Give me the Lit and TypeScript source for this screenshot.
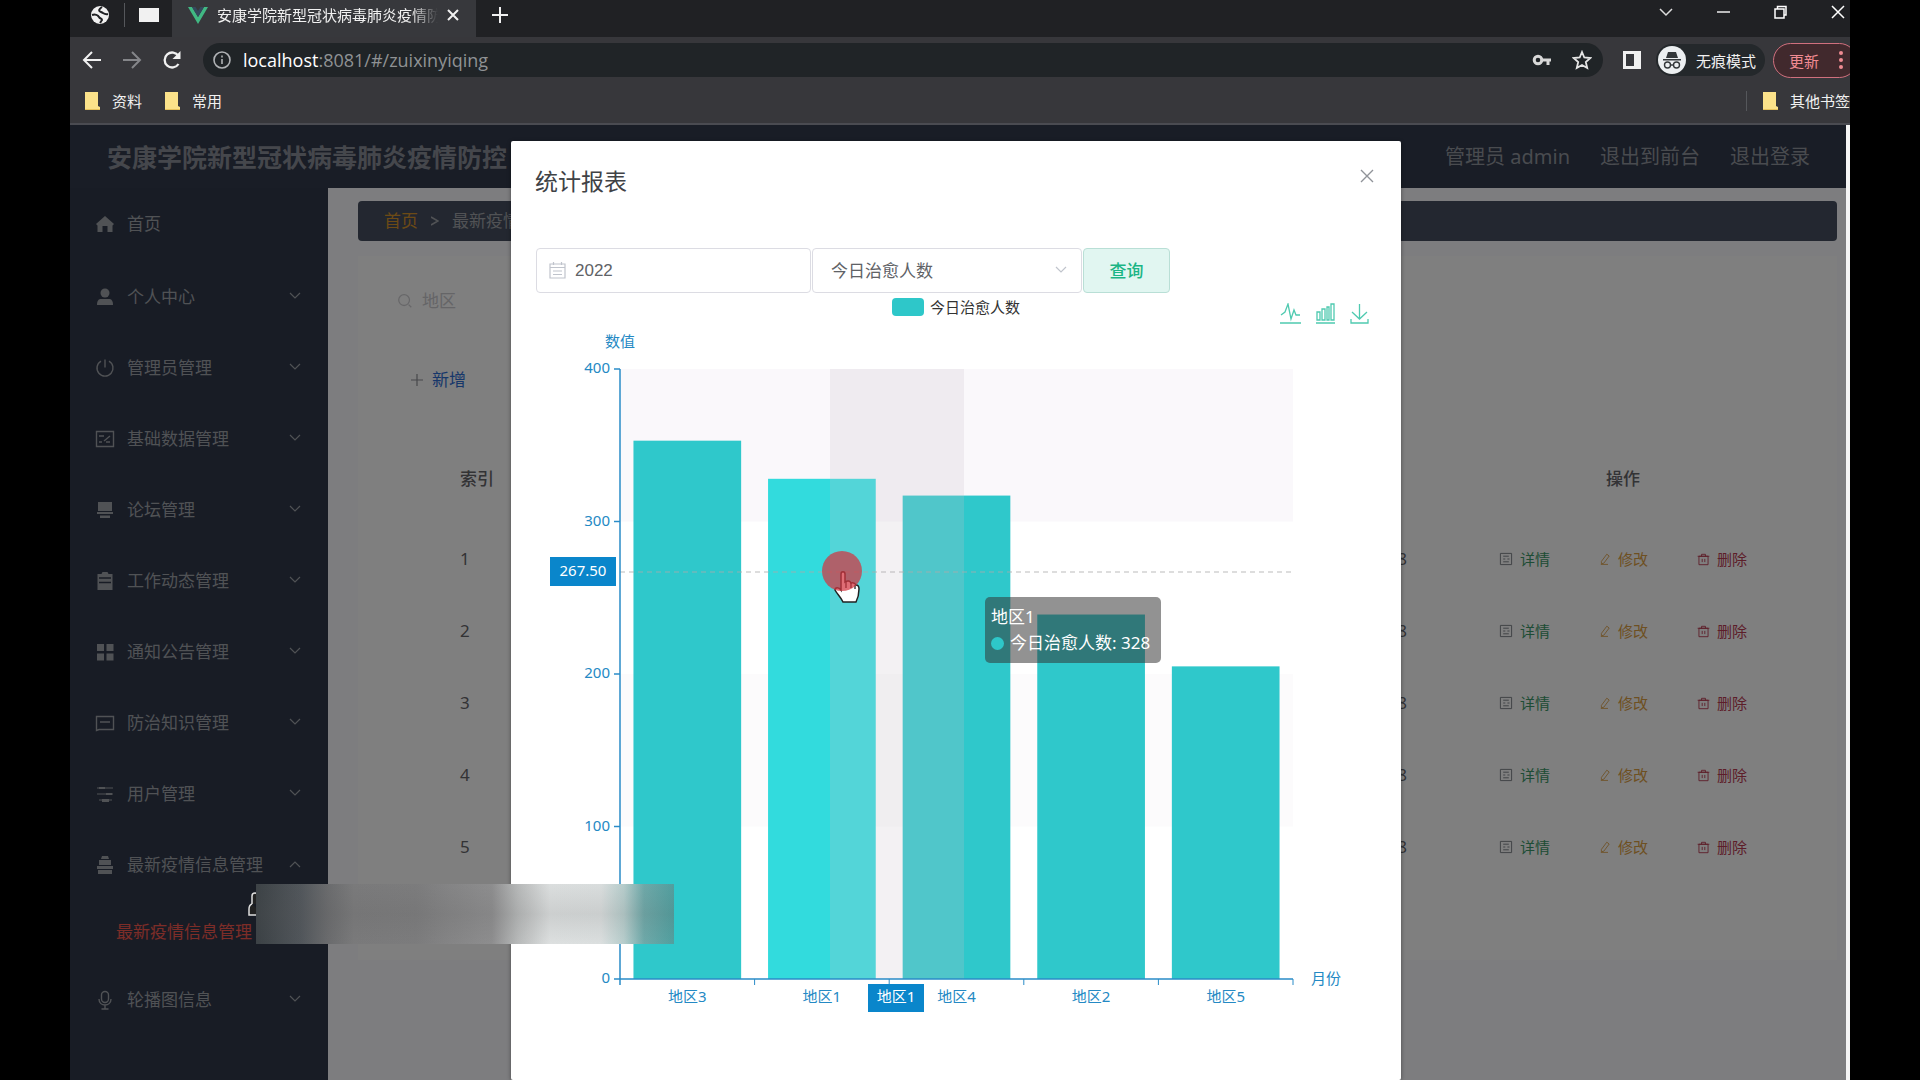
import { LitElement, html, svg, css } from "lit";
import { customElement } from "lit/decorators.js";

const stroke = (body: unknown, size = 20, cls = "") => html`<svg
  class="ico ${cls}" width=${size} height=${size} viewBox="0 0 20 20" fill="none"
  stroke="currentColor" stroke-width="1.4" aria-hidden="true">${body}</svg>`;

const menuIcons: Record<string, unknown> = {
  home: svg`<path d="M1 10 10 2l9 8-1.500 1.500V18h-5v-6h-5v6h-5v-6.500z" fill="currentColor" stroke="none"/>`,
  user: svg`<circle cx="10" cy="6" r="4.500" fill="currentColor" stroke="none"/><path d="M2 18c0-5 2-6 4-6h8c2 0 4 1 4 6z" fill="currentColor" stroke="none"/>`,
  power: svg`<path d="M6 3.200a8 8 0 1 0 8 0M10 1.500v8"/>`,
  data: svg`<path d="M1.500 2.500h17v15h-17zM4 7h5M4 13h3M9 12l6-5M11 13h4"/>`,
  forum: svg`<path d="M3 2h14v9H3zM2 12h16v2H2zM5 15.500h10V18H5z" fill="currentColor" stroke="none"/>`,
  work: svg`<path d="M2.500 3h4l1-2h5l1 2h4v16h-15z" fill="currentColor" stroke="none"/><path d="M4 7h12M4 11.500h12" stroke="#30384a"/>`,
  grid: svg`<path d="M2 2h7v7H2zM11.500 2h7v7h-7zM2 11.500h7v7H2zM11.500 11.500h7v7h-7z" fill="currentColor" stroke="none"/>`,
  card: svg`<path d="M1.500 3.500h17v13H4l-2.500 1zM5 9h10"/>`,
  sliders: svg`<path d="M2 4h16M2 10h16M4 16h13" stroke-width="1.200"/><path d="M4 3h6v2H4zM11 9h6v2h-6zM7 15h7v3H7z" fill="currentColor" stroke="none"/>`,
  bag: svg`<path d="M7 1h6l1 3H6zM4 5h12v5H4zM2 11h16v3H2zM3 15h14v4H3z" fill="currentColor" stroke="none"/>`,
  mic: svg`<rect x="6.500" y="1.500" width="7" height="11" rx="3.500"/><path d="M4 9c0 8 12 8 12 0M10 15.500v3M6.500 19h7"/>`,
};

const menu = [
  ["home", "首页", ""],
  ["user", "个人中心", "down"],
  ["power", "管理员管理", "down"],
  ["data", "基础数据管理", "down"],
  ["forum", "论坛管理", "down"],
  ["work", "工作动态管理", "down"],
  ["grid", "通知公告管理", "down"],
  ["card", "防治知识管理", "down"],
  ["sliders", "用户管理", "down"],
  ["bag", "最新疫情信息管理", "up"],
  ["mic", "轮播图信息", "down"],
];

const chevron = (dir: string) => html`<svg class="ico chev" width="12" height="12"
  viewBox="0 0 12 12" fill="none" stroke="currentColor" stroke-width="1.2" aria-hidden="true">
  <path d=${dir === "up" ? "M1 8l5-5 5 5" : "M1 2l5 5 5-5"} /></svg>`;

const fonts = css`
  :host {
    font-family: "Noto Sans", "Noto Sans CJK SC", sans-serif;
    box-sizing: border-box;
  }
  * {
    box-sizing: border-box;
  }
  button,
  input,
  select {
    font: inherit;
    color: inherit;
    background: none;
    border: 0;
    padding: 0;
    margin: 0;
  }
  a {
    color: inherit;
    text-decoration: none;
  }
  .ico {
    display: block;
    flex: none;
  }
`;

@customElement("browser-chrome")
class BrowserChrome extends LitElement {
  static styles = [
    fonts,
    css`
      :host {
        display: block;
        flex: none;
        height: 125px;
        background: #37373b;
        border-bottom: 2px solid #4a4b51;
        color: #f1f1f1;
        font-size: 15px;
        overflow: hidden;
      }
      .tabs {
        display: flex;
        height: 37px;
        background: #202124;
        padding-bottom: 7px;
        align-items: center;
      }
      .pinned {
        display: flex;
        align-items: center;
        gap: 14px;
        width: 102px;
        padding-left: 20px;
      }
      .sep {
        width: 1px;
        height: 24px;
        background: #55575b;
      }
      .tab {
        display: flex;
        align-items: center;
        gap: 9px;
        width: 304px;
        height: 37px;
        padding: 0 17px 7px 16px;
        margin-bottom: -7px;
        background: #37383c;
      }
      .title {
        flex: 1;
        overflow: hidden;
        white-space: nowrap;
        line-height: 24px;
        mask-image: linear-gradient(90deg, #000 88%, transparent);
      }
      .plus {
        margin-left: 16px;
      }
      .win {
        display: flex;
        gap: 44px;
        margin-left: auto;
        padding: 0 5px 6px 0;
      }
      .bar {
        display: flex;
        align-items: center;
        height: 46px;
      }
      .nav {
        display: flex;
        gap: 20px;
        width: 133px;
        padding-left: 12px;
      }
      .dim {
        color: #85868a;
      }
      .url {
        display: flex;
        align-items: center;
        flex: 1;
        height: 34px;
        border-radius: 17px;
        background: #202427;
        padding: 0 11px 0 10px;
        gap: 12px;
      }
      .addr {
        flex: 1;
        font-size: 18px;
        line-height: 24px;
        font-family: "Open Sans", "Noto Sans", sans-serif;
        color: #8f9294;
      }
      .addr b {
        font-weight: 400;
        color: #fff;
      }
      .url .star {
        margin-left: 8px;
      }
      .panel {
        margin: 0 15px 0 20px;
      }
      .incog {
        display: flex;
        align-items: center;
        gap: 10px;
        height: 32px;
        width: 109px;
        border-radius: 16px;
        background: #24282b;
        padding-left: 2px;
        white-space: nowrap;
      }
      .update {
        display: flex;
        align-items: center;
        gap: 20px;
        width: 84px;
        height: 35px;
        margin: 0 -7px 0 8px;
        padding-left: 15px;
        border: 1px solid #d0707e;
        border-radius: 18px;
        background: #41292d;
        color: #f08b92;
        white-space: nowrap;
      }
      .marks {
        display: flex;
        align-items: center;
        height: 35px;
        padding-left: 14px;
        white-space: nowrap;
      }
      .mark {
        display: flex;
        align-items: center;
        gap: 12px;
        margin-right: 22px;
        line-height: 20px;
      }
      .other {
        margin: 0 0 0 15px;
      }
      .marks .sep {
        margin-left: auto;
        height: 20px;
      }
    `,
  ];

  folder() {
    return html`<svg class="ico" width="16" height="18" viewBox="0 0 16 18">
      <path d="M1 0h13v14l2 1v3H1z" fill="#fbe28a" /><path d="M1 17h15v1H1z" fill="#e5c25d" />
    </svg>`;
  }

  render() {
    return html`
      <div class="tabs">
        <div class="pinned">
          <svg class="ico" width="20" height="20" viewBox="0 0 20 20">
            <circle cx="10" cy="10" r="9" fill="#f1f1f1" />
            <path d="M2 10c3-1 6 0 7 2s3 1 3 3l-2 3M12 2c-3 2-4 4-1 5s3 3 7 2" fill="none" stroke="#202124" stroke-width="2" />
          </svg>
          <span class="sep"></span>
          <svg class="ico" width="20" height="14" viewBox="0 0 20 14"><path d="M0 0h20v14H0z" fill="#f1f1f1" /></svg>
        </div>
        <div class="tab">
          <svg class="ico" width="20" height="18" viewBox="0 0 20 18">
            <path d="M0 1h4l6 10 6-10h4L10 18z" fill="#41b883" />
            <path d="M4 1h3.500L10 5l2.500-4H16l-6 10z" fill="#35495e" />
          </svg>
          <span class="title">安康学院新型冠状病毒肺炎疫情防控</span>
          <button aria-label="关闭标签页">
            <svg class="ico" width="12" height="12" viewBox="0 0 12 12" stroke="#f1f1f1" stroke-width="2"><path d="M1 1l10 10M11 1 1 11" /></svg>
          </button>
        </div>
        <button class="plus" aria-label="新标签页">
          <svg class="ico" width="16" height="16" viewBox="0 0 16 16" stroke="#f1f1f1" stroke-width="2"><path d="M8 0v16M0 8h16" /></svg>
        </button>
        <div class="win">
          <button aria-label="搜索标签页"><svg class="ico" width="14" height="14" viewBox="0 0 14 14" fill="none" stroke="#ddd" stroke-width="1.500"><path d="M1 4l6 6 6-6" /></svg></button>
          <button aria-label="最小化"><svg class="ico" width="13" height="14" viewBox="0 0 13 14" stroke="#eee" stroke-width="1.500"><path d="M0 7h13" /></svg></button>
          <button aria-label="还原"><svg class="ico" width="13" height="14" viewBox="0 0 13 14" fill="none" stroke="#fff" stroke-width="1.500"><path d="M1 4h9v9H1zM3.500 4V1.500H12V10h-2" /></svg></button>
          <button aria-label="关闭"><svg class="ico" width="14" height="14" viewBox="0 0 14 14" stroke="#fff" stroke-width="1.500"><path d="M1 1l12 12M13 1 1 13" /></svg></button>
        </div>
      </div>
      <div class="bar">
        <div class="nav">
          <button aria-label="后退">${stroke(svg`<path d="M19 10H2M10 2l-8 8 8 8" stroke-width="2"/>`)}</button>
          <button class="dim" aria-label="前进">${stroke(svg`<path d="M1 10h17M10 2l8 8-8 8" stroke-width="2"/>`)}</button>
          <button aria-label="刷新">${stroke(svg`<path d="M16.500 14a7.500 7.500 0 1 1 0-8" stroke-width="2.300"/><path d="M18.500 1v8h-8z" fill="currentColor" stroke="none"/>`)}</button>
        </div>
        <div class="url">
          <svg class="ico" width="18" height="18" viewBox="0 0 18 18" fill="none" stroke="#b0b2b5" stroke-width="1.600"><circle cx="9" cy="9" r="8" /><path d="M9 8v5M9 4.500v2" /></svg>
          <span class="addr"><b>localhost</b>:8081/#/zuixinyiqing</span>
          <svg class="ico" width="20" height="14" viewBox="0 0 20 14" fill="none" stroke="#d8d8d8" stroke-width="3"><circle cx="6" cy="7" r="3.800" /><path d="M10 7h9M16 7v5" /></svg>
          <svg class="ico star" width="20" height="20" viewBox="0 0 20 20" fill="none" stroke="#e5e5e5" stroke-width="1.800"><path d="M10 2l2.300 5.500 6 .500-4.500 4 1.400 6L10 15l-5.200 3 1.400-6L1.700 8l6-.500z" /></svg>
        </div>
        <svg class="ico panel" width="18" height="18" viewBox="0 0 18 18"><path d="M0 0h18v18H0z" fill="#f1f1f1" /><path d="M3 3h8v12H3z" fill="#37383c" /></svg>
        <div class="incog">
          <svg class="ico" width="28" height="28" viewBox="0 0 28 28">
            <circle cx="14" cy="14" r="14" fill="#eceff1" />
            <path d="M10 6h8l2 6H8zM5 13h18v1.500H5z" fill="#33373a" />
            <g fill="none" stroke="#33373a" stroke-width="1.400"><circle cx="9.500" cy="19" r="3" /><circle cx="18.500" cy="19" r="3" /><path d="M12.500 19h3" /></g>
          </svg>
          <span>无痕模式</span>
        </div>
        <button class="update">
          <span>更新</span>
          <svg class="ico" width="4" height="18" viewBox="0 0 4 18" fill="#f08b92"><circle cx="2" cy="2" r="2" /><circle cx="2" cy="9" r="2" /><circle cx="2" cy="16" r="2" /></svg>
        </button>
      </div>
      <div class="marks">
        <a class="mark" href="#">${this.folder()}<span>资料</span></a>
        <a class="mark" href="#">${this.folder()}<span>常用</span></a>
        <span class="sep"></span>
        <a class="mark other" href="#">${this.folder()}<span>其他书签</span></a>
      </div>
    `;
  }
}

@customElement("admin-page")
class AdminPage extends LitElement {
  static styles = [
    fonts,
    css`
      :host {
        display: grid;
        grid-template: 63px 1fr / 258px 1fr;
        height: 100%;
        font-size: 17px;
        line-height: 24px;
        background: #fcfcfe;
      }
      .head {
        grid-column: 1 / 3;
        display: flex;
        align-items: center;
        gap: 30px;
        padding: 0 36px 0 37px;
        background: #333a4c;
        color: #92979f;
        font-size: 20px;
      }
      h1 {
        flex: 1;
        margin: 0;
        font-size: 25px;
        font-weight: 700;
        color: #8b8f98;
      }
      nav {
        background: #30384a;
        color: #a0a4aa;
      }
      .item {
        display: flex;
        align-items: center;
        gap: 12px;
        width: 100%;
        height: 71px;
        padding: 0 27px 0 25px;
        text-align: left;
      }
      .item:first-child {
        margin-bottom: 2px;
      }
      .item span {
        flex: 1;
      }
      .sub {
        display: block;
        height: 64px;
        padding: 20px 0 0 46px;
        color: #f85a50;
      }
      main {
        padding: 13px 9px 0 30px;
        background: #fbfbfe;
      }
      .crumbs {
        display: flex;
        align-items: center;
        gap: 13px;
        height: 40px;
        padding-left: 26px;
        border-radius: 4px;
        background: #464f60;
        color: #a2a5ab;
        margin-bottom: 15px;
      }
      .crumbs a {
        color: #d8942c;
      }
      .card {
        padding: 25px 25px 77px;
        background: #fffeff;
      }
      .search {
        display: flex;
        align-items: center;
        gap: 8px;
        height: 40px;
        padding-left: 13px;
        color: #cfcfd2;
        margin-bottom: 44px;
      }
      .search input::placeholder {
        color: #cacace;
        opacity: 1;
      }
      .add {
        display: flex;
        align-items: center;
        gap: 9px;
        height: 30px;
        padding-left: 28px;
        margin-bottom: 40px;
        color: #2f6ed4;
      }
      .add .ico {
        color: #8f9096;
      }
      table {
        width: 100%;
        table-layout: fixed;
        border-collapse: collapse;
        color: #66666a;
      }
      th {
        height: 88px;
        padding: 0;
        font-weight: 500;
      }
      td {
        height: 72px;
        padding: 0;
      }
      .idx {
        width: 200px;
        padding-left: 77px;
        text-align: left;
      }
      .date {
        padding-right: 27px;
        text-align: right;
      }
      .ops {
        width: 378px;
      }
      .acts {
        display: flex;
        justify-content: center;
        gap: 49px;
        font-size: 15px;
      }
      .acts button {
        display: flex;
        align-items: center;
        gap: 7px;
      }
      .view {
        color: #3c9a6a;
      }
      .edit {
        color: #dca044;
      }
      .del {
        color: #bb3c52;
      }
      .view .ico {
        color: #80858a;
      }
    `,
  ];

  render() {
    return html`
      <header class="head">
        <h1>安康学院新型冠状病毒肺炎疫情防控</h1>
        <span>管理员 admin</span>
        <a href="#">退出到前台</a>
        <a href="#">退出登录</a>
      </header>
      <nav>
        ${menu.map(
          ([icon, label, dir]) => html`<button class="item">
              ${stroke(menuIcons[icon], 20)}<span>${label}</span>${dir ? chevron(dir) : ""}
            </button>
            ${dir === "up" ? html`<a class="sub" href="#">${label}</a>` : ""}`
        )}
      </nav>
      <main>
        <div class="crumbs">
          <a href="#">首页</a>
          <svg class="ico" width="8" height="10" viewBox="0 0 8 10" fill="none" stroke="currentColor" stroke-width="1.600"><path d="M0 1l7 4-7 4" /></svg>
          <span>最新疫情</span>
        </div>
        <section class="card">
          <div class="search">
            ${stroke(svg`<circle cx="9" cy="9" r="6"/><path d="M14 14l3 3"/>`, 18)}
            <input type="text" placeholder="地区" aria-label="地区" />
          </div>
          <button class="add">
            <svg class="ico" width="12" height="12" viewBox="0 0 12 12" stroke="currentColor" stroke-width="1.200"><path d="M6 0v12M0 6h12" /></svg>新增
          </button>
          <table>
            <thead>
              <tr><th class="idx">索引</th><th class="date"></th><th class="ops">操作</th></tr>
            </thead>
            <tbody>
              ${[1, 2, 3, 4, 5].map(
                (n) => html`<tr>
                  <td class="idx">${n}</td>
                  <td class="date">8</td>
                  <td class="ops">
                    <div class="acts">
                      <button class="view">${stroke(svg`<path d="M2 2h16v16H2zM6 6h8M6 10h3M6 14h8M12 10h3"/>`, 14)}详情</button>
                      <button class="edit">${stroke(svg`<path d="M4 14 13 2l4 3-9 12-4 1zM3 19h12"/>`, 12)}修改</button>
                      <button class="del">${stroke(svg`<path d="M3 5h14v13H3zM1 5h18M7 5V2h6v3M8 9v5M12 9v5"/>`, 13)}删除</button>
                    </div>
                  </td>
                </tr>`
              )}
            </tbody>
          </table>
        </section>
      </main>
    `;
  }
}

/* Plot geometry, in viewBox units */
const plot = { left: 84, top: 44, width: 673, height: 610, max: 400 };
const series = [
  { name: "地区3", value: 353 },
  { name: "地区1", value: 328, active: true },
  { name: "地区4", value: 317 },
  { name: "地区2", value: 239 },
  { name: "地区5", value: 205 },
];

@customElement("report-chart")
class ReportChart extends LitElement {
  static styles = [
    fonts,
    css`
      :host {
        display: block;
        position: relative;
        font-size: 15px;
      }
      .top {
        display: grid;
        grid-template-columns: 1fr auto 1fr;
        height: 32px;
        padding: 3px 0 0;
      }
      .legend {
        grid-column: 2;
        display: flex;
        align-items: center;
        gap: 6px;
        height: 22px;
        line-height: 20px;
        color: #333;
      }
      .swatch {
        width: 32px;
        height: 18px;
        border-radius: 4px;
        background: #2ec7c9;
      }
      .tools {
        display: flex;
        justify-content: flex-end;
        gap: 14px;
        padding: 6px 7px 0 0;
        color: #4fcab0;
      }
      .plot {
        display: block;
        width: 100%;
      }
      text {
        fill: #2489c4;
        font-size: 15px;
      }
      .mid {
        text-anchor: middle;
      }
      .end {
        text-anchor: end;
      }
      .inv {
        fill: #fff;
      }
      .tip {
        position: absolute;
        left: 449px;
        top: 304px;
        width: 176px;
        height: 66px;
        padding: 7px 6px;
        border-radius: 5px;
        background: rgba(50, 50, 50, 0.53);
        color: #fff;
        font-size: 17px;
        line-height: 26px;
        white-space: nowrap;
      }
      .row {
        display: flex;
        align-items: center;
        gap: 6px;
      }
      .dot {
        width: 13px;
        height: 13px;
        border-radius: 50%;
        background: #2ec7c9;
      }
      .mouse {
        position: absolute;
        left: 285px;
        top: 257px;
      }
    `,
  ];

  render() {
    const base = plot.top + plot.height;
    const step = plot.width / series.length;
    const y = (v: number) => base - (v / plot.max) * plot.height;
    return html`
      <div class="top">
        <div class="legend"><span class="swatch"></span>今日治愈人数</div>
        <div class="tools">
          <button aria-label="切换为折线图">
            <svg class="ico" width="21" height="21" viewBox="0 0 21 21" fill="none" stroke="currentColor" stroke-width="1.300"><path d="M1 12l4-3 3-8 3 15 3-9 2 5h4M0 20h21" /></svg>
          </button>
          <button aria-label="切换为柱状图">
            <svg class="ico" width="21" height="21" viewBox="0 0 21 21" fill="none" stroke="currentColor" stroke-width="1.300"><path d="M2 9h3v8H2zM7 6h3v11H7zM12 4h2v13h-2zM16 1h3v16h-3zM1 20h19" /></svg>
          </button>
          <button aria-label="保存为图片">
            <svg class="ico" width="19" height="21" viewBox="0 0 19 21" fill="none" stroke="currentColor" stroke-width="1.300"><path d="M9.500 1v15M2 9l7.500 7L17 9M1 16v4h17v-4" /></svg>
          </button>
        </div>
      </div>
      <svg class="plot" viewBox="0 0 840 703" role="img" aria-label="今日治愈人数">
        ${[300, 100].map(
          (v) => svg`<rect x=${plot.left} y=${y(v + 100)} width=${plot.width} height=${plot.height / 4} fill=${v > 200 ? "#faf8fb" : "#fcfbfc"}/>`
        )}
        ${series.map(
          (s, i) => svg`<rect x=${plot.left + step * i + step * 0.1} y=${y(s.value)} width=${step * 0.8}
            height=${base - y(s.value)} fill=${s.active ? "#32dbdd" : "#2fc8cb"}/>
            <text class="mid" x=${plot.left + step * (i + 0.5)} y="677">${s.name}</text>`
        )}
        <rect x="294" y=${plot.top} width="134" height=${plot.height} fill="rgba(200,190,200,0.22)"/>
        <path d="M84 247H757" stroke="#aaa" stroke-opacity="0.8" stroke-dasharray="5 4" fill="none"/>
        <g stroke="#2a8cc8" fill="none">
          <path d="M84 44V660M78 654H757" stroke-width="1.500"/>
          ${[400, 300, 200, 100].map((v) => svg`<path d="M78 ${y(v)}H84" stroke-width="1.500"/>`)}
          ${[1, 2, 3, 4, 5].map((i) => svg`<path d="M${plot.left + step * i} 654v6"/>`)}
        </g>
        ${[400, 300, 200, 100, 0].map((v) => svg`<text class="end" x="74" y=${y(v) + 4}>${v}</text>`)}
        <text class="mid" x="84" y="22">数值</text>
        <text x="775" y="659">月份</text>
        <rect x="14" y="232" width="66" height="29" fill="#0a86cb"/>
        <text class="mid inv" x="47" y="251">267.50</text>
        <rect x="332" y="659" width="56" height="28" fill="#0a86cb"/>
        <text class="mid inv" x="360" y="677">地区1</text>
      </svg>
      <div class="tip">
        <div>地区1</div>
        <div class="row"><span class="dot"></span>今日治愈人数: 328</div>
      </div>
      <svg class="mouse" width="42" height="54" viewBox="0 0 42 54">
        <path d="M20 24c0-3 4-3 4 0v8c3-2 5-1 6 1 3-1 4 0 5 2 2 0 3 1 3 4 0 7-1 9-3 13H22c-2-5-6-8-8-12 0-3 4-3 6 0z" fill="#fff" stroke="#222" stroke-width="1.500"/>
        <path d="M25 32v6M30 33v5M34 35v4" stroke="#222" stroke-width="1.300"/>
        <circle cx="21" cy="21" r="20" fill="#d23440" fill-opacity="0.720"/>
      </svg>
    `;
  }
}

@customElement("report-dialog")
class ReportDialog extends LitElement {
  static styles = [
    fonts,
    css`
      :host {
        display: block;
        width: calc(50% + 4px);
        min-height: 100%;
        background: #fff;
        border-radius: 2px;
        box-shadow: 0 1px 4px rgba(0, 0, 0, 0.4);
        color: #606266;
        font-size: 17px;
      }
      header {
        display: flex;
        align-items: flex-start;
        justify-content: space-between;
        height: 82px;
        padding: 26px 25px 0 24px;
      }
      h2 {
        margin: 0;
        font-size: 23px;
        line-height: 28px;
        font-weight: 400;
        color: #404246;
      }
      .body {
        padding: 25px 25px 0;
      }
      .filters {
        display: flex;
        gap: 1px;
        height: 45px;
      }
      .box {
        display: flex;
        align-items: center;
        flex: 0 0 275px;
        gap: 9px;
        padding: 0 12px;
        border: 1px solid #dcdce3;
        border-radius: 4px;
        color: #c0c4cc;
      }
      .pick {
        flex-basis: 270px;
        padding: 0 14px 0 18px;
      }
      .box input,
      .box select {
        flex: 1;
        min-width: 0;
        height: 100%;
        color: #606266;
        appearance: none;
        outline: 0;
      }
      .box input {
        font-family: "Liberation Sans", sans-serif;
      }
      .query {
        flex: 0 0 87px;
        border: 1px solid #b9dfd6;
        border-radius: 4px;
        background: #e1f6f1;
        color: #1bb585;
        font-weight: 500;
        line-height: 24px;
      }
    `,
  ];

  render() {
    return html`
      <header>
        <h2>统计报表</h2>
        <button aria-label="关闭">
          <svg class="ico" width="18" height="18" viewBox="0 0 18 18" stroke="#909399" stroke-width="1.400"><path d="M3 3l12 12M15 3 3 15" /></svg>
        </button>
      </header>
      <div class="body">
        <form class="filters">
          <label class="box">
            <svg class="ico" width="17" height="17" viewBox="0 0 17 17" fill="none" stroke="currentColor" stroke-width="1.200"><path d="M1 2h15v14H1zM1 5.500h15M4 9h9M4 12.500h9M4.500 0v3M12.500 0v3" /></svg>
            <input type="text" value="2022" aria-label="年份" />
          </label>
          <label class="box pick">
            <select aria-label="统计项"><option>今日治愈人数</option></select>
            ${chevron("down")}
          </label>
          <button type="button" class="query">查询</button>
        </form>
        <report-chart></report-chart>
      </div>
    `;
  }
}

@customElement("app-root")
class AppRoot extends LitElement {
  static styles = css`
    :host {
      display: block;
      background: #000;
      padding: 0 70px;
    }
    .screen {
      position: relative;
      display: flex;
      flex-direction: column;
      height: 100vh;
      overflow: hidden;
    }
    .view {
      position: relative;
      flex: 1;
      min-height: 0;
      border-right: 4px solid #f4f4f4;
    }
    .mask {
      position: absolute;
      inset: 0;
      display: flex;
      justify-content: center;
      padding: 16px 4px 0 0;
      background: rgba(0, 0, 0, 0.5);
    }
    .hand {
      position: absolute;
      left: 178px;
      top: 892px;
    }
    .smudge {
      position: absolute;
      left: 186px;
      top: 884px;
      width: 418px;
      height: 60px;
      background: linear-gradient(180deg, rgba(120, 120, 120, 0.04), rgba(90, 90, 90, 0.14) 50%, rgba(120, 120, 120, 0.02)),
        linear-gradient(90deg, #3a4044 0, #50555a 45px, #6a6b6d 72px, #7a7a7b 98px, #7c7c7d 160px, #848485 190px, #8e8e8f 236px, #b9bbbb 262px, #dfe2e2 294px, #dde1e1 345px, #b8cfce 368px, #6eaaaa 388px, #50a0a0 418px);
    }
  `;

  render() {
    return html`
      <div class="screen">
        <browser-chrome></browser-chrome>
        <div class="view">
          <admin-page></admin-page>
          <div class="mask"><report-dialog></report-dialog></div>
        </div>
        <svg class="hand" width="16" height="26" viewBox="0 0 16 26" fill="#222" stroke="#ddd" stroke-width="1.500">
          <path d="M4 12V4q0-3 3-3t3 3v8M4 12q-3 1-3 5v6h14" />
        </svg>
        <div class="smudge"></div>
      </div>
    `;
  }
}
